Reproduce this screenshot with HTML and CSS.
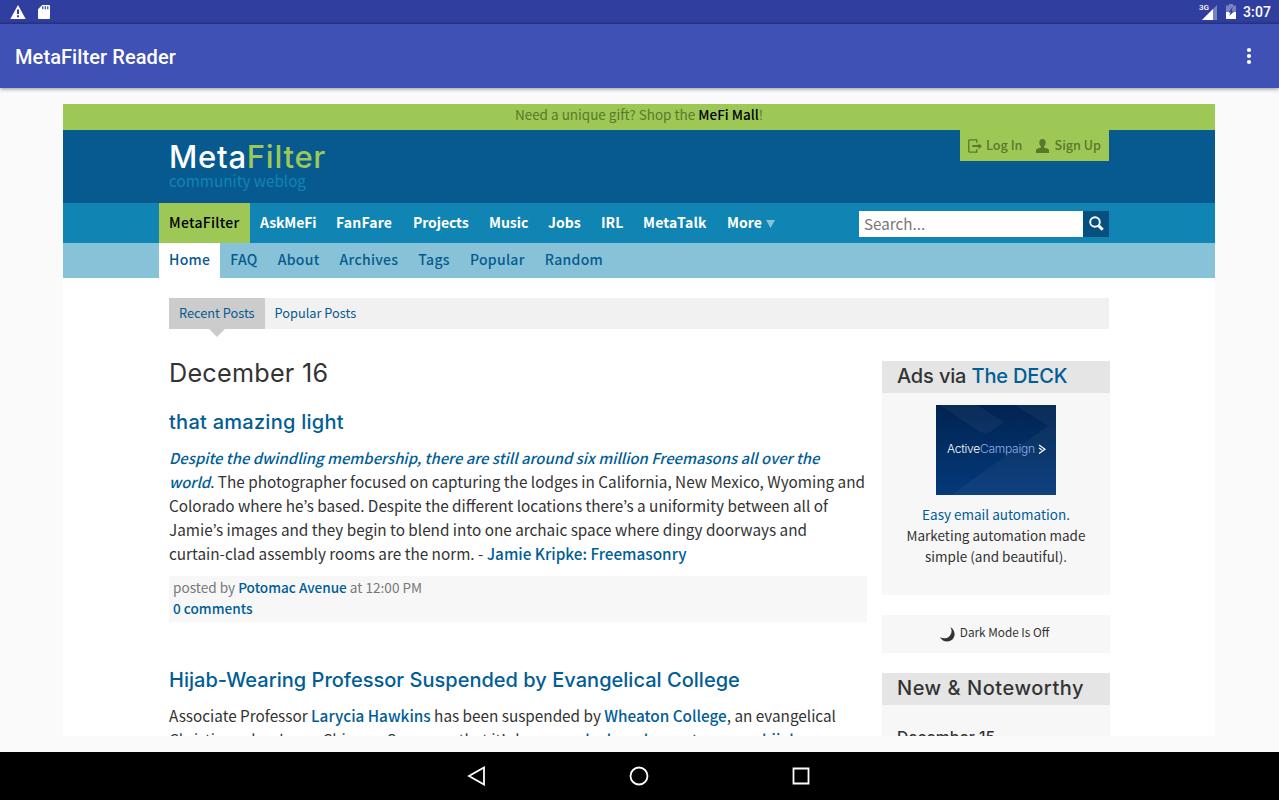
FILE: index.html
```html
<!DOCTYPE html>
<html lang="en">
<head>
<meta charset="utf-8">
<title>MetaFilter Reader</title>
<link rel="stylesheet" href="styles.css">
</head>
<body>
<div class="device">
  <div class="status">
    <svg class="st-warn" width="16" height="14" viewBox="0 0 16 14"><path fill="#fff" fill-rule="evenodd" d="M8 0 15.7 14H.3zM7 4.5V9h2V4.500zM7 10.300v2h2v-2z"/></svg>
    <svg class="st-sd" width="12" height="14" viewBox="0 0 12 14"><path fill="#fff" fill-rule="evenodd" d="M4.200 0H11a1 1 0 0 1 1 1v12a1 1 0 0 1-1 1H1a1 1 0 0 1-1-1V4.200zM4.200 1.300v2.900h1.200V1.300zM6.700 1.300v2.900h1.200V1.300zM9.200 1.300v2.900h1.200V1.300z"/></svg>
    <span class="st-net">3G</span>
    <svg class="st-signal" width="15" height="15" viewBox="0 0 15 15"><path fill="#fff" fill-opacity=".35" d="M15 0v15H0z"/><path fill="#fff" d="M11 4v11H0z"/></svg>
    <svg class="st-batt" width="10" height="15" viewBox="0 0 10 15"><path fill="#fff" fill-opacity=".35" d="M3 0h4v1.500h3V8H0V1.500h3z"/><path fill="#fff" d="M0 8h10v7H0z"/><path fill="#303f9f" d="M6.500 3 2.500 8.500H4.600L3.200 12 8 7.500H5.800z"/></svg>
    <span class="clock">3:07</span>
  </div>
  <header class="appbar">
    <h1 class="app-title">MetaFilter Reader</h1>
    <svg width="6" height="18" viewBox="0 0 6 18" fill="#fff"><circle cx="3" cy="3" r="2.100"/><circle cx="3" cy="9" r="2.100"/><circle cx="3" cy="15" r="2.100"/></svg>
  </header>
  <main class="stage">
    <div class="web">
      <div class="promo">Need a unique gift? Shop the <b>MeFi Mall</b>!</div>
      <div class="masthead">
        <div class="inner mast-row">
          <div class="brand"><div class="logo">Meta<span>Filter</span></div><div class="tagline">community weblog</div></div>
          <div class="account">
            <svg width="14" height="14" viewBox="0 0 14 14"><path fill="none" stroke="#58792a" stroke-width="1.300" d="M8.700 3.800V.9H1.500L.8 1.600v10.800l.7.700h7.200v-2.900"/><path fill="#58792a" d="M4.300 6h6.200V4.200l3.500 3-3.500 3V8H4.300z"/></svg>
            <span class="login">Log In</span>
            <svg width="13" height="14" viewBox="0 0 13 14" fill="#58792a"><path d="M3.300 3.500C3.300 1 4.600 0 6.500 0s3.200 1 3.200 3.500c0 1.800-.7 3.200-1.700 3.900v1.100l4 1.300c.7.300 1 .9 1 1.700V14H0v-2.500c0-.8.3-1.400 1-1.700l4-1.300V7.400C4 6.700 3.300 5.300 3.300 3.500z"/></svg>
            <span class="signup">Sign Up</span>
          </div>
        </div>
      </div>
      <nav class="nav">
        <div class="inner nav-row">
          <a class="on n10">MetaFilter</a><a class="w76 tight">AskMeFi</a><a class="w77 loose">FanFare</a><a class="w76 tight">Projects</a><a class="w59">Music</a><a class="w53">Jobs</a><a class="w42">IRL</a><a class="w84 loose">MetaTalk</a><a>More<svg class="tri" width="9" height="8" viewBox="0 0 9 8"><path fill="#88c2d8" d="M0 0h9L4.500 8z"/></svg></a>
          <form class="search"><span class="field">Search...</span><span class="go"><svg width="15" height="15" viewBox="0 0 15 15" fill="none" stroke="#fff"><circle cx="6" cy="6" r="4.800" stroke-width="1.900"/><path stroke-width="3" d="m9.700 9.700 4 4"/></svg></span></form>
        </div>
      </nav>
      <nav class="subnav">
        <div class="inner sub-row"><a class="on">Home</a><a>FAQ</a><a>About</a><a>Archives</a><a>Tags</a><a>Popular</a><a>Random</a></div>
      </nav>
      <div class="inner">
        <div class="tabs"><a class="on">Recent Posts</a><a>Popular Posts</a></div>
        <div class="cols">
          <div class="posts">
            <h2 class="date">December 16</h2>
            <article class="post">
              <h3 class="title wide">that amazing light</h3>
              <p class="copy"><b class="lead">Despite the dwindling membership, there are still around six million Freemasons all over the<br>world</b>. The photographer focused on capturing the lodges in California, New Mexico, Wyoming and<br>Colorado where he’s based. Despite the different locations there’s a uniformity between all of<br>Jamie’s images and they begin to blend into one archaic space where dingy doorways and<br>curtain-clad assembly rooms are the norm. - <b>Jamie Kripke: Freemasonry</b></p>
              <div class="meta">posted by <b>Potomac Avenue</b> at 12:00 PM<br><b>0 comments</b></div>
            </article>
            <article class="post">
              <h3 class="title">Hijab-Wearing Professor Suspended by Evangelical College</h3>
              <p class="copy">Associate Professor <b>Larycia Hawkins</b> has been suspended by <b>Wheaton College</b>, an evangelical<br>Christian school near Chicago. Some say that it’s because <b>she has chosen to wear a hijab</b></p>
            </article>
          </div>
          <aside class="side">
            <section class="panel ads">
              <h3 class="panel-title ads-title">Ads via <span>The DECK</span></h3>
              <svg class="banner" width="120" height="90" viewBox="0 0 120 90">
                <defs><linearGradient id="g" x1="0" y1="0" x2="0" y2="1"><stop offset="0" stop-color="#002451"/><stop offset="1" stop-color="#05397a"/></linearGradient></defs>
                <path fill="url(#g)" d="M0 0h120v90H0z"/>
                <path fill="#fff" fill-opacity=".045" d="M4 0h37l27 17-14 10q-5 2-10 0zM79 0h41v90H15l97-69z"/>
                <text class="ad-text" x="11" y="48" fill="#fff" textLength="88">Active<tspan fill="#8bb0e8">Campaign</tspan></text>
                <path fill="none" stroke="#fff" stroke-width="1.200" d="m103 40 6 4.200-6 4.300M103 43l3 2"/>
              </svg>
              <p class="ad-copy"><span>Easy email automation</span>.<br>Marketing automation made<br>simple (and beautiful).</p>
            </section>
            <section class="panel dark"><svg width="15" height="15" viewBox="0 0 15 15"><path fill="#333" d="M10.500 0C16 3.500 16 11.200 10.300 13.800 6.500 15.500 2 14 0 10.200c3.300 1.700 7.500 1.500 9.800-1.500C12 6 12 3 10.500 0z"/></svg><span class="dark-label">Dark Mode Is Off</span></section>
            <section class="panel">
              <h3 class="panel-title noteworthy">New &amp; Noteworthy</h3>
              <h4 class="sub-date">December 15</h4>
            </section>
          </aside>
        </div>
      </div>
    </div>
  </main>
  <footer class="keys">
    <svg width="20" height="20" viewBox="0 0 20 20"><path d="M17 1.500v17L2 10z"/></svg>
    <svg width="20" height="20" viewBox="0 0 20 20"><circle cx="10" cy="10" r="8.500"/></svg>
    <svg width="20" height="20" viewBox="0 0 20 20"><path d="M2.500 2.500h15v15h-15z"/></svg>
  </footer>
</div>
</body>
</html>
```
FILE: styles.css
```css
*{box-sizing:border-box}
body{margin:0;background:#fafafa;color:#333;font-family:"Noto Sans CJK JP",sans-serif}
h1,h2,h3,h4,p{margin:0}
svg{display:block;flex:none}
b{font-weight:500}
.device{width:1279px;height:800px;display:flex;flex-direction:column;overflow:hidden}

.status{flex:none;height:24px;padding:0 8px 0 10px;display:flex;align-items:center;background:linear-gradient(#303f9f 21px,#2a378b);color:#fff;font-family:Roboto,sans-serif}
.st-sd{margin-left:12px}
.st-net{margin-left:auto;align-self:flex-start;margin-top:3px;font-size:8px;line-height:9px;font-weight:500}
.st-signal{margin-left:-7px;margin-top:1px}
.st-batt{margin-left:9px;margin-top:-2px}
.clock{margin-left:7px;font-size:14px;font-weight:500;letter-spacing:.1px;line-height:24px}
.appbar{flex:none;position:relative;z-index:1;height:64px;padding:0 27px 0 15px;display:flex;align-items:center;justify-content:space-between;background:#3f51b5;box-shadow:0 1px 4px rgba(0,0,0,.42)}
.app-title{color:#fff;font:500 20px/24px Roboto,sans-serif;letter-spacing:.09px;padding-top:2px}

.stage{flex:none;height:664px;padding:16px 64px 16px 63px;background:#fafafa}
.web{height:632px;background:#fff;overflow:hidden}
.inner{margin:0 106px}
.promo{height:26px;background:#9dc856;color:#58792a;text-align:center;font-size:13.500px;line-height:20px}
.promo b{color:#000}
.masthead{height:73px;background:#065a8f}
.mast-row{display:flex;justify-content:space-between;align-items:flex-start}
.brand{padding-top:11px}
.logo{font:500 31px/32px Inter,sans-serif;letter-spacing:.75px;color:#fff}
.logo span{color:#9dc856}
.tagline{margin-top:-1px;font-size:15.250px;line-height:17px;color:#1085b3}
.account{width:149px;height:31px;padding:0 7px 0 8px;display:flex;align-items:center;background:#9dc856;color:#58792a;font-size:12.600px;line-height:18px;font-weight:500}
.login{margin:0 14px 2px 4px}
.signup{margin:0 0 2px 5px}

.nav{height:40px;background:#1085b3}
.nav-row{display:flex;margin-left:96px;height:40px}
.nav-row a{padding:0 10px 2px;color:#fff;font-size:14px;font-weight:700;line-height:38px;display:flex;align-items:center;white-space:nowrap}
.nav-row .on{background:#9dc856;color:#000;font-weight:500;letter-spacing:.27px}
.n10{width:91px}.w76{width:76px}.w77{width:77px}.w59{width:59px}.w53{width:53px}.w42{width:42px}.w84{width:84px}
.nav-row .tight{letter-spacing:-.1px}
.nav-row .loose{letter-spacing:.19px}
.tri{margin-left:4px;margin-top:3px}
.search{margin:8px 0 0 auto;display:flex;height:26px}
.field{width:224px;padding-left:5px;background:#fff;color:#777;font-size:15.200px;line-height:25px}
.go{width:26px;padding:5px 0 0 6px;background:#065080}
.subnav{height:35px;background:#88c2d8}
.sub-row{display:flex;margin-left:96px}
.sub-row a{padding:0 10px;height:35px;font-size:14px;line-height:33px;font-weight:500;letter-spacing:.3px;color:#065a8f}
.sub-row .on{background:#fff}

.tabs{display:flex;height:31px;margin-top:20px;background:#f1f1f1}
.tabs a{position:relative;padding:0 10px;font-size:12.780px;line-height:30px;color:#065a8f}
.tabs .on{background:#ccc}
.tabs .on::after{content:"";position:absolute;left:40px;top:31px;border:8px solid transparent;border-top-color:#ccc;border-bottom:0}
.cols{display:flex;gap:15px;margin-top:32px;margin-right:-1px}
.posts{width:698px}
.date{font:400 25.200px/24px Inter,sans-serif;letter-spacing:.25px}
.post{padding-top:25px}
.post+.post{padding-top:46px}
.title{font:500 20px/24px Inter,sans-serif;color:#005d96;letter-spacing:.02px}
.wide{letter-spacing:.26px}
.copy{margin-top:11px;font-size:15.310px;line-height:24px;white-space:nowrap}
.copy b,.meta b{color:#005d96}
.copy .lead{font-style:italic;font-size:14.840px;line-height:0}
.meta{margin-top:11px;height:46px;padding:1px 4px;background:#f7f7f7;color:#777;font-size:13.600px;line-height:21px}

.side{width:228px;display:flex;flex-direction:column;gap:20px}
.panel{background:#f7f7f7;height:120px}
.ads{height:234px}
.panel-title{height:32px;padding-left:15px;background:#e5e5e5;font:500 20px/31px Inter,sans-serif}
.ads-title{letter-spacing:-.15px}
.noteworthy{letter-spacing:.53px}
.panel-title span,.ad-copy span{color:#005d96}
.banner{margin:12px auto 0}
.ad-text{font:300 12px Inter,sans-serif}
.ad-copy{margin-top:9px;text-align:center;font-size:13.500px;line-height:21px}
.dark{height:38px;display:flex;align-items:center;justify-content:center;gap:5px;font-size:11.770px;line-height:18px;padding-right:3px}
.dark-label{margin-bottom:4px}
.sub-date{padding:23px 15px 0;font:500 15.700px/20px Inter,sans-serif}

.keys{flex:none;height:48px;padding-right:2px;display:flex;align-items:center;justify-content:center;gap:142px;background:#000}
.keys svg{fill:none;stroke:#fff;stroke-width:1.800}
```
